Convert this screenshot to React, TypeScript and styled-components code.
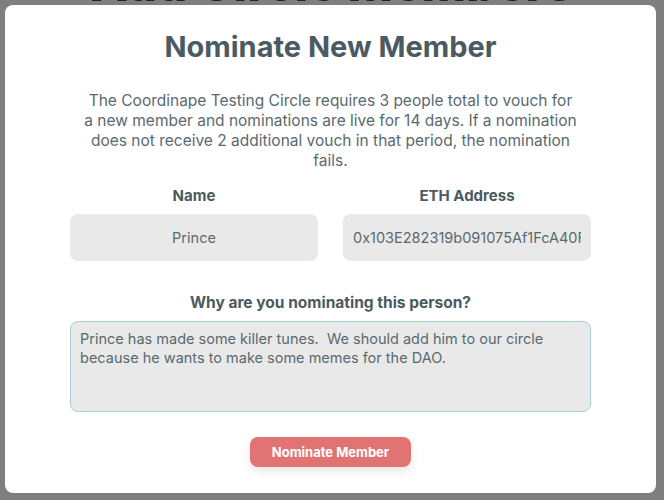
import styled, { createGlobalStyle } from "styled-components";

const GlobalStyle = createGlobalStyle`
  html, body {
    margin: 0;
    padding: 0;
    background: #ffffff;
    font-family: Inter, "Noto Sans", sans-serif;
    overflow: hidden;
  }
`;

const ETH_ADDRESS = "0x103E282319b091075Af1FcA40F0F3B64a4C11e4E";

const App = () => {
  return (
    <>
      <GlobalStyle />
      <Page>
        <PageTitle>Add Circle Members</PageTitle>
        <PageText>
          Now you can add new members to your circle, and the circle will vouch for you
        </PageText>
      </Page>

      <Overlay>
        <Modal>
          <Title>Nominate New Member</Title>
          <Description>
            The Coordinape Testing Circle requires 3 people total to vouch for
            <br />
            a new member and nominations are live for 14 days. If a nomination
            <br />
            does not receive 2 additional vouch in that period, the nomination
            <br />
            fails.
          </Description>

          <FieldRow>
            <Field>
              <Label>Name</Label>
              <TextInput value="Prince" readOnly />
            </Field>
            <Field>
              <Label>ETH Address</Label>
              <TextInput value={ETH_ADDRESS} readOnly />
            </Field>
          </FieldRow>

          <Field $wide>
            <Label $big>Why are you nominating this person?</Label>
            <TextArea
              readOnly
              value="Prince has made some killer tunes.  We should add him to our circle because he wants to make some memes for the DAO."
            />
          </Field>

          <SubmitButton>Nominate Member</SubmitButton>
        </Modal>
      </Overlay>
    </>
  );
};
export default App;

const Page = styled.main`
  height: 500px;
  overflow: hidden;
  display: flex;
  flex-direction: column;
  align-items: center;
`;

const PageTitle = styled.h1`
  margin: -44px 0 0;
  font-size: 48px;
  line-height: 56px;
  font-weight: 800;
  white-space: nowrap;
  color: #3d4a50;
`;

const PageText = styled.p`
  margin: 12px 0 0;
  white-space: nowrap;
  font-size: 16px;
  color: #3d4a50;
`;

const Overlay = styled.div`
  position: fixed;
  inset: 0;
  background: rgba(0, 0, 0, 0.5);
  padding: 5px 8px 7px 5px;
  box-sizing: border-box;
  display: flex;
`;

const Modal = styled.section`
  flex: 1;
  min-width: 0;
  background: #ffffff;
  border-radius: 8px;
  padding: 24px 65px 0;
  box-sizing: border-box;
  display: flex;
  flex-direction: column;
  align-items: center;
`;

const Title = styled.h2`
  margin: 0;
  font-size: 29px;
  line-height: 36px;
  font-weight: 700;
  color: #4b5a60;
`;

const Description = styled.p`
  margin: 26px 0 0;
  font-size: 15.5px;
  line-height: 20px;
  white-space: nowrap;
  text-align: center;
  color: #5a696f;
`;

const FieldRow = styled.div`
  margin-top: 15px;
  width: 100%;
  display: grid;
  grid-template-columns: minmax(0, 1fr) minmax(0, 1fr);
  gap: 25px;
`;

const Field = styled.label<{ $wide?: boolean }>`
  display: flex;
  flex-direction: column;
  align-items: stretch;
  gap: 8px;
  width: 100%;
  min-width: 0;
  margin-top: ${(p) => (p.$wide ? "32px" : "0")};
`;

const Label = styled.span<{ $big?: boolean }>`
  font-size: ${(p) => (p.$big ? "15.5px" : "15px")};
  line-height: 20px;
  font-weight: 700;
  text-align: center;
  color: #4b5a60;
`;

const TextInput = styled.input`
  height: 47px;
  width: 100%;
  min-width: 0;
  box-sizing: border-box;
  border: none;
  outline: none;
  border-radius: 8px;
  background: #e9e9e9;
  padding: 0 10px;
  font-family: inherit;
  font-size: 14.5px;
  text-align: center;
  color: #5a696f;
`;

const TextArea = styled.textarea`
  height: 91px;
  box-sizing: border-box;
  resize: none;
  outline: none;
  border: 1px solid #a3d2cf;
  border-radius: 8px;
  background: #e9e9e9;
  padding: 7px 9px;
  font-family: inherit;
  font-size: 14.5px;
  line-height: 19px;
  color: #5a696f;
`;

const SubmitButton = styled.button`
  margin-top: 25px;
  width: 161px;
  height: 30px;
  border: none;
  border-radius: 8px;
  background: #e17473;
  color: #ffffff;
  font-family: inherit;
  font-size: 13px;
  font-weight: 700;
  box-shadow: 0 4px 10px rgba(0, 0, 0, 0.1);
  cursor: pointer;
`;
